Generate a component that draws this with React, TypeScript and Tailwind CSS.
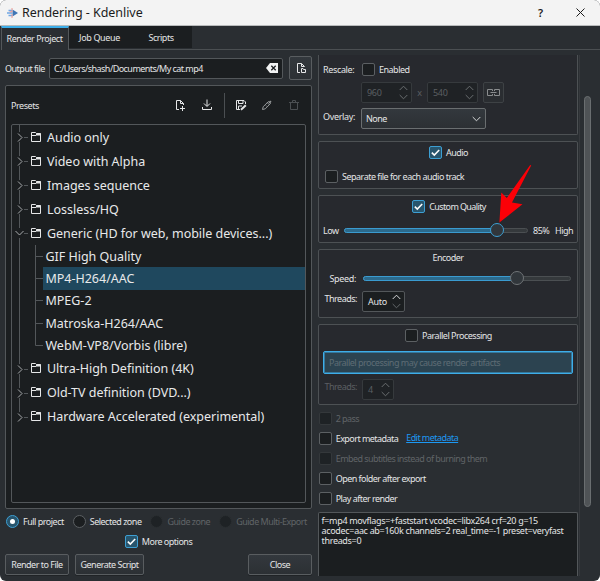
import { ReactNode, useState } from "react";

const folders = [
    { name: "Audio only" },
    { name: "Video with Alpha" },
    { name: "Images sequence" },
    { name: "Lossless/HQ" },
    {
        name: "Generic (HD for web, mobile devices...)",
        presets: ["GIF High Quality", "MP4-H264/AAC", "MPEG-2", "Matroska-H264/AAC", "WebM-VP8/Vorbis (libre)"],
    },
    { name: "Ultra-High Definition (4K)" },
    { name: "Old-TV definition (DVD...)" },
    { name: "Hardware Accelerated (experimental)" },
];

interface CheckProps {
    checked?: boolean;
    disabled?: boolean;
    children?: ReactNode;
}

const Check = ({ checked, disabled, children }: CheckProps) => {
    const [on, setOn] = useState(!!checked);
    return (
        <button disabled={disabled} onClick={() => setOn(!on)} className={`flex h-[13px] items-center gap-[4px] whitespace-nowrap ${disabled ? "text-[#606467]" : ""}`}>
            <span className={`flex h-[13px] w-[13px] shrink-0 items-center justify-center rounded-[2px] border ${on ? "border-[#3d9fd3] bg-[#28556d]" : disabled ? "border-[#34383b] bg-[#1e2225]" : "border-[#5c6063] bg-[#1b1e20]"}`}>
                {on && (
                    <svg width="9" height="9" viewBox="0 0 9 9" fill="none" stroke="#fcfcfc" strokeWidth="1.6">
                        <path d="M0.8 4.6 3.3 7 8.2 2" />
                    </svg>
                )}
            </span>
            <span>{children}</span>
        </button>
    );
};

const Radio = ({ checked, disabled, children }: CheckProps) => (
    <div className={`flex items-center gap-[4px] ${disabled ? "text-[#606467]" : ""}`}>
        <span className={`flex h-[13px] w-[13px] items-center justify-center rounded-full border ${checked ? "border-[#3d9fd3] bg-[#28556d]" : disabled ? "border-[#2a2e31] bg-[#1e2225]" : "border-[#5c6063] bg-[#1b1e20]"}`}>
            {checked && <span className="h-[5px] w-[5px] rounded-full bg-white" />}
        </span>
        <span>{children}</span>
    </div>
);

const Spin = ({ value, disabled, className }: { value: string; disabled?: boolean; className: string }) => (
    <div className={`flex h-[21px] items-center justify-between rounded-[2px] border pr-[3px] pl-[5px] ${disabled ? "border-[#363a3d] bg-[#1f2225] text-[#5b5f62]" : "border-[#53575a] bg-[#1b1e20]"} ${className}`}>
        <span className="tracking-[-0.3px]">{value}</span>
        <svg width="9" height="15" viewBox="0 0 9 15" fill="none" strokeWidth="1">
            <path d="M0.7 5 4.5 1.2 8.3 5" stroke={disabled ? "#6a6e70" : "#d8dadb"} />
            <path d="M0.7 10 4.5 13.8 8.3 10" stroke={disabled ? "#6a6e70" : "#64686b"} />
        </svg>
    </div>
);

const Slider = ({ percent, active }: { percent: number; active?: boolean }) => (
    <div className="relative h-[5px] flex-1 rounded-full border border-[#4b4f52] bg-[#35393c]">
        <div className="absolute -top-px -left-px h-[5px] rounded-full border border-[#3a9bd0] bg-[#2c6a8c]" style={{ width: `${percent}%` }} />
        <div className={`absolute top-[-6px] -ml-[7px] h-[14px] w-[14px] rounded-full border bg-[#31363b] ${active ? "border-[#3d9fd3]" : "border-[#707477]"}`} style={{ left: `${percent}%` }} />
    </div>
);

const PushButton = ({ children, className }: { children: ReactNode; className: string }) => (
    <button className={`flex h-[21px] items-center justify-center rounded-[2px] border border-[#595d60] bg-linear-to-b from-[#33383d] to-[#2c3034] whitespace-nowrap shadow-[0_1px_0_#202326] ${className}`}>
        {children}
    </button>
);

const Group = ({ children, className }: { children: ReactNode; className: string }) => (
    <div className={`mb-[6px] shrink-0 rounded-[2px] border border-[#4d5154] bg-[#27292e] ${className}`}>{children}</div>
);

const FolderIcon = () => (
    <svg width="11" height="11" viewBox="0 0 11 11" fill="none" stroke="#e6e7e8" strokeWidth="1">
        <path d="M0.5 9.5V0.5H4.5L5.5 1.5H9.5V9.5Z" />
        <path d="M5 2.5H10" strokeWidth="2" />
        <path d="M1 3.5H5" />
    </svg>
);

const PresetTree = () => {
    const [selected, setSelected] = useState("MP4-H264/AAC");
    return (
        <div className="flex-1 overflow-hidden rounded-[2px] border border-[#53575a] text-[12.5px] tracking-[-0.02px] text-[#e8e9ea]">
            {folders.map((folder, i) => (
                <div key={folder.name}>
                    <div className="flex h-[24px] items-center">
                        <svg width="18" height="24" viewBox="0 0 18 24" fill="none" stroke="#53575a" className="mr-[1px]">
                            <path d={i === folders.length - 1 ? "M7.5 0V7" : "M7.5 0V7M7.5 17V24"} />
                            <path d="M12 12.5H16" />
                            <path d={folder.presets ? "M3.5 10 7.5 14 11.5 10" : "M6 8.5 10 12.5 6 16.5"} stroke="#a9acae" />
                        </svg>
                        <FolderIcon />
                        <span className="ml-[5px] pt-px whitespace-nowrap">{folder.name}</span>
                    </div>
                    {folder.presets?.map((preset, n) => (
                        <div key={preset} className="flex h-[22.4px] items-center" onClick={() => setSelected(preset)}>
                            <svg width="31" height="23" viewBox="0 0 31 23" fill="none" stroke="#53575a" className="shrink-0">
                                <path d="M7.5 0V23" />
                                <path d={n === 4 ? "M23.5 0V11.5H31" : "M23.5 0V23M23.5 11.5H31"} />
                            </svg>
                            <span className={`flex h-full flex-1 items-center pt-px pl-[2.5px] ${selected === preset ? "bg-[#1f485e]" : ""}`}>{preset}</span>
                        </div>
                    ))}
                </div>
            ))}
        </div>
    );
};

const PresetToolbar = () => (
    <div className="flex h-[38px] items-center pr-[6px]">
        <span className="flex-1 pt-px tracking-[-0.45px]">Presets</span>
        <svg width="12" height="12" viewBox="0 0 12 12" fill="none" stroke="#e6e7e8" className="mr-[15px]">
            <path d="M5 10.5H2.5V1.5H6.5L9.5 4.5V6M6.5 1.5V4.5H9.5M8.5 7V12M6 9.5H11" />
        </svg>
        <svg width="12" height="12" viewBox="0 0 12 12" fill="none" stroke="#e6e7e8" className="mr-[11px]">
            <path d="M6 0.5V7M3 4.5 6 7.5 9 4.5M1.5 8V10.5H10.5V8" />
        </svg>
        <span className="mr-[10px] h-[25px] w-px bg-[#4b4f52]" />
        <svg width="12" height="12" viewBox="0 0 12 12" fill="none" stroke="#e6e7e8" className="mr-[14px]">
            <path d="M5 10.5H1.5V1.5H9L10.5 3V5M3.5 2V4.5H8V2M3.5 10V7H7" />
            <path d="M6 10.8 10.8 6.3" strokeWidth="2" />
        </svg>
        <svg width="12" height="12" viewBox="0 0 12 12" fill="none" stroke="#95989a" className="mr-[15px]">
            <path d="M1.5 10.5 2.2 7.7 7.5 2.5 9.5 4.5 4.3 9.8ZM6.3 3.7 8.3 5.7M5 6.5 6 7.5" />
            <path d="M8.3 2.3 9.7 3.7" strokeWidth="2.4" />
        </svg>
        <svg width="12" height="12" viewBox="0 0 12 12" fill="none" stroke="#4b4f52">
            <path d="M1 3.5H11M4.5 3V1.5H7.5V3M2.5 4V10.5H9.5V4" />
        </svg>
    </div>
);

const ProjectPanel = () => (
    <div className="flex w-[307px] shrink-0 flex-col">
        <div className="flex h-[24px] items-center">
            <span className="w-[44px] pt-px whitespace-nowrap">Output file</span>
            <div className="flex h-[21px] w-[234px] items-center justify-between rounded-[2px] border border-[#53575a] bg-[#1b1e20] pr-[4px] pl-[4px]">
                <span className="pt-px tracking-[-0.55px]">C:/Users/shash/Documents/My cat.mp4</span>
                <svg width="12" height="10" viewBox="0 0 12 10">
                    <path d="M0 5 4 0H12V10H4Z" fill="#f1f2f2" />
                    <path d="M5.3 2.8 9.7 7.2M9.7 2.8 5.3 7.2" stroke="#1b1e20" strokeWidth="1.3" />
                </svg>
            </div>
            <button className="ml-[6px] flex h-[24px] w-[23px] items-center justify-center rounded-[2px] border border-[#595d60] bg-linear-to-b from-[#33383d] to-[#2c3034]">
                <svg width="12" height="12" viewBox="0 0 12 12" fill="none" stroke="#e6e7e8">
                    <path d="M5 10.5H2.5V1.5H6.5L9.5 4.5M6.5 1.5V4.5H9.5M6.5 10.5V6.5H8L8.5 7.5H10.5V10.5Z" />
                </svg>
            </button>
        </div>
        <div className="mt-[5px] flex h-[424px] flex-col rounded-[2px] border border-[#53575a] bg-[#1b1e20] px-[5px] pb-[5px]">
            <PresetToolbar />
            <PresetTree />
        </div>
        <div className="mt-[6px] flex h-[13px] items-center gap-[9px] pl-[1px] whitespace-nowrap">
            <Radio checked>Full project</Radio>
            <Radio>Selected zone</Radio>
            <Radio disabled>Guide zone</Radio>
            <Radio disabled>Guide Multi-Export</Radio>
        </div>
        <div className="mt-[7px] flex justify-center">
            <Check checked>More options</Check>
        </div>
        <div className="mt-[6px] flex">
            <PushButton className="mr-[6px] w-[64px]">Render to File</PushButton>
            <PushButton className="w-[69px]">Generate Script</PushButton>
            <PushButton className="ml-auto w-[64px]">Close</PushButton>
        </div>
    </div>
);

const OptionsPanel = () => (
    <div className="-mt-px ml-[6px] flex h-[521px] w-[262px] flex-col overflow-hidden border-r border-[#36393d] pr-px">
        <div className="mb-[6px] h-[80px] shrink-0 rounded-b-[2px] border border-t-0 border-[#4d5154] bg-[#27292e] pt-[8px] pl-[4px]">
            <div className="flex h-[13px] items-center">
                <span className="w-[39px] tracking-[-0.35px]">Rescale:</span>
                <Check>Enabled</Check>
            </div>
            <div className="mt-[6px] ml-[38px] flex items-center text-[#5b5f62]">
                <Spin value="960" disabled className="w-[51px]" />
                <span className="w-[15px] text-center">x</span>
                <Spin value="540" disabled className="w-[51px]" />
                <span className="ml-[5px] flex h-[21px] w-[21px] items-center justify-center rounded-[2px] border border-[#3e4245] bg-[#2a2d31]">
                    <svg width="13" height="9" viewBox="0 0 13 9" fill="none" stroke="#8a8d8f">
                        <path d="M5.5 3V1.5H0.5V7.5H5.5V6M7.5 3V1.5H12.5V7.5H7.5V6M3.5 4.5H9.5" />
                    </svg>
                </span>
            </div>
            <div className="mt-[5px] flex">
                <span className="w-[38px] pt-[3px] tracking-[-0.35px]">Overlay:</span>
                <div className="flex h-[21px] w-[125px] items-center justify-between rounded-[2px] border border-[#6a6e70] bg-linear-to-b from-[#33383d] to-[#2c3034] px-[4px]">
                    <span className="pt-px">None</span>
                    <svg width="9" height="6" viewBox="0 0 9 6" fill="none" stroke="#d8dadb">
                        <path d="M0.7 1 4.5 4.8 8.3 1" />
                    </svg>
                </div>
            </div>
        </div>
        <Group className="h-[48px] pt-[4px]">
            <div className="flex justify-center pl-px">
                <Check checked>Audio</Check>
            </div>
            <div className="mt-[11px] pl-[6px]">
                <Check>Separate file for each audio track</Check>
            </div>
        </Group>
        <Group className="h-[48px] pt-[4px]">
            <div className="flex justify-center pl-[2px] tracking-[-0.6px]">
                <Check checked>Custom Quality</Check>
            </div>
            <div className="mt-[11px] flex h-[13px] items-center pr-[4px] pl-[4px]">
                <span className="w-[21px]">Low</span>
                <Slider percent={83.5} active />
                <span className="ml-[5px] w-[22px]">85%</span>
                <span className="w-[18px]">High</span>
            </div>
        </Group>
        <Group className="h-[69px] pt-[2px]">
            <div className="text-center">Encoder</div>
            <div className="mt-[8px] flex h-[13px] items-center pr-[6px]">
                <span className="w-[44px] pt-px pr-[7px] text-right tracking-[-0.35px]">Speed:</span>
                <Slider percent={74.2} />
            </div>
            <div className="mt-[6px] flex">
                <span className="w-[43px] pt-[2px] pr-[5px] text-right">Threads:</span>
                <Spin value="Auto" className="w-[43px]" />
            </div>
        </Group>
        <Group className="h-[81px] px-[4px] pt-[4px]">
            <div className="flex justify-center pl-px">
                <Check>Parallel Processing</Check>
            </div>
            <div className="mt-[9px] flex h-[23px] items-center rounded-[2px] border border-[#3daee9] bg-[#2c4350] pl-[5px] text-[#5f6d75] ring-1 ring-[#3daee9]/50 ring-inset">
                Parallel processing may cause render artifacts
            </div>
            <div className="mt-[5px] flex text-[#5b5f62]">
                <span className="w-[39px] pt-[2px] pr-[5px] text-right">Threads:</span>
                <Spin value="4" disabled className="w-[32px]" />
            </div>
        </Group>
        <div className="mt-[1px] flex shrink-0 flex-col gap-[7px] pl-[0.7px] tracking-[-0.55px]">
            <Check disabled>2 pass</Check>
            <div className="flex gap-[8px]">
                <Check>Export metadata</Check>
                <a className="text-[#1d99f3] underline">Edit metadata</a>
            </div>
            <Check disabled>Embed subtitles instead of burning them</Check>
            <Check>Open folder after export</Check>
            <Check>Play after render</Check>
        </div>
        <div className="mt-[7px] flex-1 rounded-t-[2px] border border-b-0 border-[#53575a] bg-[#1b1e20] px-[2.5px] pt-[3px] leading-[10px] tracking-[-0.32px] whitespace-nowrap">
            <p>f=mp4 movflags=+faststart vcodec=libx264 crf=20 g=15</p>
            <p>acodec=aac ab=160k channels=2 real_time=-1 preset=veryfast</p>
            <p>threads=0</p>
        </div>
    </div>
);

const App = () => {
    return (
        <div className="relative h-[581px] w-[600px] overflow-hidden rounded-[6px] bg-[#2a2e32] font-['Noto_Sans',sans-serif] text-[9px] leading-[12px] tracking-[-0.5px] text-[#e4e5e6]">
            <header className="flex h-[25px] items-center bg-[#f3f3f3] pr-[15px] pl-[7px] tracking-[-0.05px] text-[#1b1b1b]">
                <svg width="11" height="10" viewBox="0 0 11 10" className="mr-[4px]">
                    <path d="M5.5 1.5 11 5 5.5 8.5Z" fill="#3f76b5" />
                    <path d="M1.5 2.5H5.5M0 5H5M1.5 7.5H5.5" stroke="#6fa8e6" strokeWidth="1.3" />
                    <path d="M5 0V3.8M2.5 3.8H5M5 6.2V10" stroke="#ee9a91" />
                </svg>
                <span className="flex-1 text-[12.5px]">Rendering - Kdenlive</span>
                <span className="mr-[33px] text-[11px] font-semibold">?</span>
                <svg width="9" height="9" viewBox="0 0 9 9" stroke="#1b1b1b">
                    <path d="M0.5 0.5 8.5 8.5M8.5 0.5 0.5 8.5" />
                </svg>
            </header>
            <nav className="flex h-[24px] border-t border-[#b9bbbc] pl-px whitespace-nowrap">
                <button className="h-[24px] w-[68px] border-t-2 border-r border-l border-t-[#3daee9] border-r-[#53575a] border-l-[#53575a] bg-[#2a2e32] pr-px tracking-[-0.45px]">Render Project</button>
                <button className="h-[22px] w-[61px] bg-[#1b1e20] pt-px tracking-[-0.35px]">Job Queue</button>
                <button className="h-[22px] w-[62px] bg-[#1b1e20] pt-px">Scripts</button>
            </nav>
            <div className="ml-[68px] h-px bg-[#4b4f52]" />
            <main className="flex h-[526px] pt-[6px] pl-[5px]">
                <ProjectPanel />
                <OptionsPanel />
                <div className="mt-[40px] ml-[4px] h-[411px] w-[7px] rounded-full border border-[#6a6e70] bg-[#4f5356]" />
            </main>
            <svg width="34" height="60" viewBox="0 0 34 60" className="pointer-events-none absolute top-[164px] left-[499px]">
                <path d="M0.4 58.5 2.3 28.5 7.8 34 31.2 1 32.2 1.5 13 38.5 23.5 40.3Z" fill="#fb0007" />
            </svg>
        </div>
    );
};

export default App;
